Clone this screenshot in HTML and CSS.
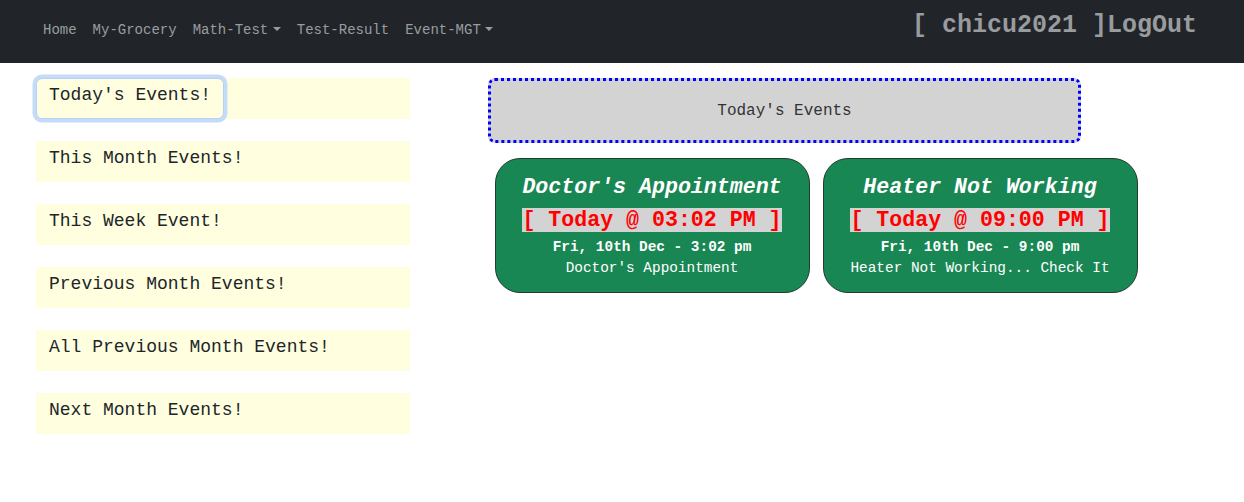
FILE: index.html
```html
<!DOCTYPE html>
<html lang="en">
<head>
<meta charset="utf-8">
<title>Event-MGT</title>
<link rel="stylesheet" href="styles.css">
</head>
<body>
<nav class="navbar">
  <ul class="nav-links">
    <li><a class="nav-link" href="#">Home</a></li>
    <li><a class="nav-link" href="#">My-Grocery</a></li>
    <li><a class="nav-link dropdown-toggle" href="#">Math-Test</a></li>
    <li><a class="nav-link" href="#">Test-Result</a></li>
    <li><a class="nav-link dropdown-toggle" href="#">Event-MGT</a></li>
  </ul>
  <div class="user"><span class="user-name">[ chicu2021 ]</span><a class="logout" href="#">LogOut</a></div>
</nav>
<main class="page">
  <aside class="side">
    <div class="side-item"><button class="side-btn focused">Today's Events!</button></div>
    <div class="side-item"><button class="side-btn">This Month Events!</button></div>
    <div class="side-item"><button class="side-btn">This Week Event!</button></div>
    <div class="side-item"><button class="side-btn">Previous Month Events!</button></div>
    <div class="side-item"><button class="side-btn">All Previous Month Events!</button></div>
    <div class="side-item"><button class="side-btn">Next Month Events!</button></div>
  </aside>
  <section class="content">
    <div class="heading-box">Today's Events</div>
    <div class="cards">
      <div class="card">
        <h3 class="card-title">Doctor's Appointment</h3>
        <div class="card-when"><span class="when-text">[ Today @ 03:02 PM ]</span></div>
        <div class="card-date">Fri, 10th Dec - 3:02 pm</div>
        <div class="card-desc">Doctor's Appointment</div>
      </div>
      <div class="card">
        <h3 class="card-title">Heater Not Working</h3>
        <div class="card-when"><span class="when-text">[ Today @ 09:00 PM ]</span></div>
        <div class="card-date">Fri, 10th Dec - 9:00 pm</div>
        <div class="card-desc">Heater Not Working... Check It</div>
      </div>
    </div>
  </section>
</main>
</body>
</html>
```
FILE: styles.css
```css
* { box-sizing: border-box; }
body {
  margin: 0;
  font-family: "Liberation Mono", "Courier New", monospace;
  background: #fff;
  color: #212529;
}
.navbar {
  display: flex;
  justify-content: space-between;
  align-items: flex-start;
  height: 63px;
  background: #212529;
  padding: 0 47px 0 35px;
}
.nav-links {
  display: flex;
  list-style: none;
  margin: 0;
  padding: 19.5px 0 0;
}
.nav-link {
  display: block;
  padding: 0 8px;
  font-size: 14px;
  line-height: 21px;
  color: #9a9da0;
  text-decoration: none;
}
.dropdown-toggle::after {
  content: "";
  display: inline-block;
  margin-left: 4.5px;
  vertical-align: 3px;
  border-top: 4.5px solid #9a9da0;
  border-left: 4.5px solid transparent;
  border-right: 4.5px solid transparent;
}
.user {
  padding-top: 11px;
  font-size: 25px;
  line-height: 30px;
  font-weight: bold;
  color: #999b9e;
}
.logout {
  color: #999b9e;
  text-decoration: none;
}
.page {
  display: flex;
  align-items: flex-start;
  padding: 15px 0 0 36px;
}
.side {
  width: 374px;
  flex: none;
  display: flex;
  flex-direction: column;
  gap: 22px;
}
.side-item {
  height: 41px;
  background: #ffffe0;
  display: flex;
}
.side-btn {
  font-family: "Liberation Mono", "Courier New", monospace;
  font-size: 18px;
  line-height: 27px;
  color: #212529;
  background: #ffffe0;
  border: 1px solid transparent;
  border-radius: 6px;
  padding: 3px 12px 9px;
  margin: 0;
  text-align: left;
}
.side-btn.focused {
  border-color: #b6d0f6;
  box-shadow: 0 0 0 3.5px #c5dbfa;
}
.content {
  margin-left: 78px;
  width: 700px;
  flex: none;
}
.heading-box {
  width: 593px;
  height: 65px;
  display: flex;
  align-items: center;
  justify-content: center;
  background: #d3d3d3;
  border: 3px dotted #0000ff;
  border-radius: 7px;
  font-size: 16px;
  color: #333;
}
.cards {
  display: flex;
  flex-wrap: wrap;
  margin-top: 8.5px;
}
.card {
  width: 315px;
  height: 135px;
  margin: 6.5px;
  background: #198754;
  border: 1px solid #243b2e;
  border-radius: 25px;
  padding-top: 14px;
  text-align: center;
  color: #fff;
}
.card-title {
  margin: 0;
  font-size: 21.6px;
  line-height: 28px;
  font-weight: bold;
  font-style: italic;
}
.card-when {
  margin-top: 6px;
  font-size: 21.6px;
  line-height: 26px;
  font-weight: bold;
  color: #ff0000;
}
.when-text {
  background: #d3d3d3;
}
.card-date {
  margin-top: 3.5px;
  font-size: 14.4px;
  line-height: 21px;
  font-weight: bold;
}
.card-desc {
  font-size: 14.4px;
  line-height: 21px;
}
```
